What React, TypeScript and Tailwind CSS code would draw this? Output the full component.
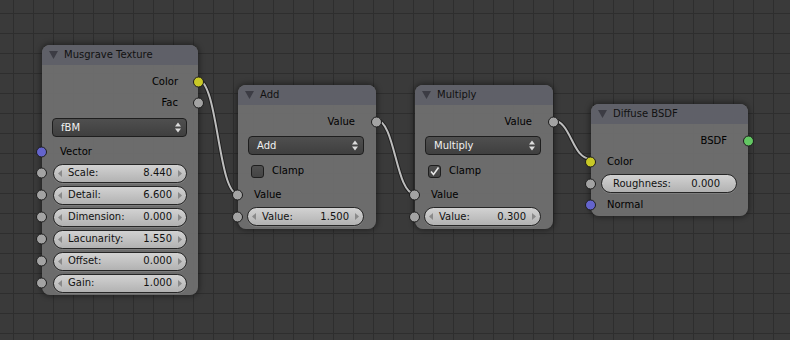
import React from 'react';

type SocketKind = 'gray' | 'yellow' | 'blue' | 'green';

const socketColor: Record<SocketKind, string> = {
  gray: 'bg-[#a3a3a3]',
  yellow: 'bg-[#c9c927]',
  blue: 'bg-[#6464cc]',
  green: 'bg-[#63c763]',
};

// sockets sit on the node edge, over the border
const Socket: React.FC<{ kind: SocketKind; side: 'left' | 'right' }> = ({ kind, side }) => (
  <span
    className={`absolute top-1/2 -translate-y-1/2 w-[11px] h-[11px] rounded-full border border-[#1c1c1c] ${socketColor[kind]} ${
      side === 'left' ? 'left-[-6px]' : 'right-[-6px]'
    }`}
  />
);

const Node: React.FC<{
  x: number;
  y: number;
  w: number;
  h: number;
  title: string;
  children: React.ReactNode;
}> = ({ x, y, w, h, title, children }) => (
  <div
    className="absolute rounded-[8px] bg-[#727272]/90 shadow-[0_0_5px_2px_rgba(0,0,0,0.35)] flex flex-col"
    style={{ left: x, top: y, width: w, height: h }}
  >
    {/* header */}
    <div className="h-[20px] rounded-t-[8px] bg-[#5e5f68]/90 flex items-center pl-[7px] gap-[6px] text-[#111] shrink-0">
      <svg width="9" height="8" viewBox="0 0 9 8">
        <path d="M0 0 L9 0 L4.5 8 Z" fill="#3c3c44" />
      </svg>
      <span>{title}</span>
    </div>
    {children}
  </div>
);

const Arrow: React.FC<{ dir: 'l' | 'r' }> = ({ dir }) => (
  <svg width="4" height="7" viewBox="0 0 4 7" className="shrink-0">
    <path d={dir === 'l' ? 'M4 0 L0 3.5 L4 7 Z' : 'M0 0 L4 3.5 L0 7 Z'} fill="#8a8a8a" />
  </svg>
);

const NumField: React.FC<{ label: string; value: string; arrows?: boolean }> = ({ label, value, arrows = true }) => (
  <div className="h-[19px] flex-1 rounded-full border border-[#262626] bg-[linear-gradient(to_bottom,#d2d2d2,#b2b2b2)] flex items-center px-[4px] text-[#111] shadow-[0_1px_0_rgba(255,255,255,0.12)]">
    {arrows && <Arrow dir="l" />}
    <span className={arrows ? 'ml-[6px]' : 'ml-[7px]'}>{label}</span>
    <span className={`ml-auto ${arrows ? 'mr-[6px]' : 'mr-[12px]'}`}>{value}</span>
    {arrows && <Arrow dir="r" />}
  </div>
);

const Dropdown: React.FC<{ label: string }> = ({ label }) => (
  <div className="h-[19px] flex-1 rounded-[4px] border border-[#1e1e1e] bg-[linear-gradient(to_bottom,#4f4f4f,#3f3f3f)] flex items-center pl-[8px] pr-[5px] text-[#f0f0f0]">
    <span>{label}</span>
    <svg width="6" height="11" viewBox="0 0 6 11" className="ml-auto">
      <path d="M0 4.5 L3 0.5 L6 4.5 Z M0 6.5 L3 10.5 L6 6.5 Z" fill="#dcdcdc" />
    </svg>
  </div>
);

const Checkbox: React.FC<{ checked?: boolean }> = ({ checked }) => (
  <span className="w-[13px] h-[13px] rounded-[3px] border border-[#1e1e1e] bg-[linear-gradient(to_bottom,#505050,#444)] flex items-center justify-center">
    {checked && (
      <svg width="11" height="11" viewBox="0 0 11 11">
        <path d="M2 5.5 L4.5 8.5 L9.5 1.5" stroke="#e8e8e8" strokeWidth="1.6" fill="none" />
      </svg>
    )}
  </span>
);

const link = (x1: number, y1: number, x2: number, y2: number) => {
  const d = (x2 - x1) * 0.5;
  return `M${x1} ${y1} C${x1 + d} ${y1}, ${x2 - d} ${y2}, ${x2} ${y2}`;
};

const links = [link(198, 80, 238, 194), link(376, 120, 415, 194), link(552, 120, 591, 159)];

const musgraveFields = [
  ['Scale:', '8.440'],
  ['Detail:', '6.600'],
  ['Dimension:', '0.000'],
  ['Lacunarity:', '1.550'],
  ['Offset:', '0.000'],
  ['Gain:', '1.000'],
];

const MathNode: React.FC<{ x: number; op: string; clamp: boolean; value: string }> = ({ x, op, clamp, value }) => (
  <Node x={x} y={85} w={138} h={144} title={op}>
    <div className="relative h-[22px] mt-[6px] flex items-center justify-end pr-[21px]">
      Value
      <Socket kind="gray" side="right" />
    </div>
    <div className="flex mt-[3px] ml-[10px] mr-[12px]">
      <Dropdown label={op} />
    </div>
    <div className="h-[24px] mt-[4px] flex items-center pl-[13px] gap-[8px]">
      <Checkbox checked={clamp} />
      <span>Clamp</span>
    </div>
    <div className="relative h-[24px] flex items-center pl-[16px]">
      Value
      <Socket kind="gray" side="left" />
    </div>
    <div className="relative flex ml-[9px] mr-[12px]">
      <NumField label="Value:" value={value} />
      <span className="absolute left-[-9px] top-0 bottom-0">
        <Socket kind="gray" side="left" />
      </span>
    </div>
  </Node>
);

const App: React.FC = () => {
  return (
    <div
      className="relative w-[790px] h-[340px] overflow-hidden bg-[#3a3a3a] bg-[linear-gradient(to_right,#2e2e2e_1px,transparent_1px),linear-gradient(to_bottom,#2e2e2e_1px,transparent_1px)] bg-[size:20px_20px] bg-[position:13px_13px] text-[10px] leading-none"
      style={{ fontFamily: '"DejaVu Sans", Verdana, sans-serif' }}
    >
      {/* links */}
      <svg className="absolute inset-0" width="790" height="340">
        {links.map((d, i) => (
          <g key={i}>
            <path d={d} stroke="#1f1f1f" strokeWidth="4" fill="none" />
            <path d={d} stroke="#bdbdbd" strokeWidth="2" fill="none" />
          </g>
        ))}
      </svg>

      {/* Musgrave Texture */}
      <Node x={42} y={45} w={156} h={250} title="Musgrave Texture">
        <div className="relative h-[22px] mt-[6px] flex items-center justify-end pr-[20px]">
          Color
          <Socket kind="yellow" side="right" />
        </div>
        <div className="relative h-[20px] flex items-center justify-end pr-[20px]">
          Fac
          <Socket kind="gray" side="right" />
        </div>
        <div className="flex mt-[5px] ml-[10px] mr-[11px]">
          <Dropdown label="fBM" />
        </div>
        <div className="relative h-[20px] mt-[5px] flex items-center pl-[18px]">
          Vector
          <Socket kind="blue" side="left" />
        </div>
        <div className="flex flex-col">
          {musgraveFields.map(([label, value]) => (
            <div key={label} className="relative h-[22px] flex items-center ml-[11px] mr-[11px]">
              <NumField label={label} value={value} />
              <span className="absolute left-[-11px] top-0 bottom-0">
                <Socket kind="gray" side="left" />
              </span>
            </div>
          ))}
        </div>
      </Node>

      <MathNode x={238} op="Add" clamp={false} value="1.500" />
      <MathNode x={415} op="Multiply" clamp={true} value="0.300" />

      {/* Diffuse BSDF */}
      <Node x={591} y={104} w={157} h={112} title="Diffuse BSDF">
        <div className="relative h-[22px] mt-[6px] flex items-center justify-end pr-[21px]">
          BSDF
          <Socket kind="green" side="right" />
        </div>
        <div className="relative h-[20px] flex items-center pl-[16px]">
          Color
          <Socket kind="yellow" side="left" />
        </div>
        <div className="relative flex mt-[2px] ml-[10px] mr-[11px]">
          <NumField label="Roughness:" value="0.000" arrows={false} />
          <span className="absolute left-[-10px] top-0 bottom-0">
            <Socket kind="gray" side="left" />
          </span>
        </div>
        <div className="relative h-[22px] mt-[1px] flex items-center pl-[16px]">
          Normal
          <Socket kind="blue" side="left" />
        </div>
      </Node>
    </div>
  );
};

export default App;
